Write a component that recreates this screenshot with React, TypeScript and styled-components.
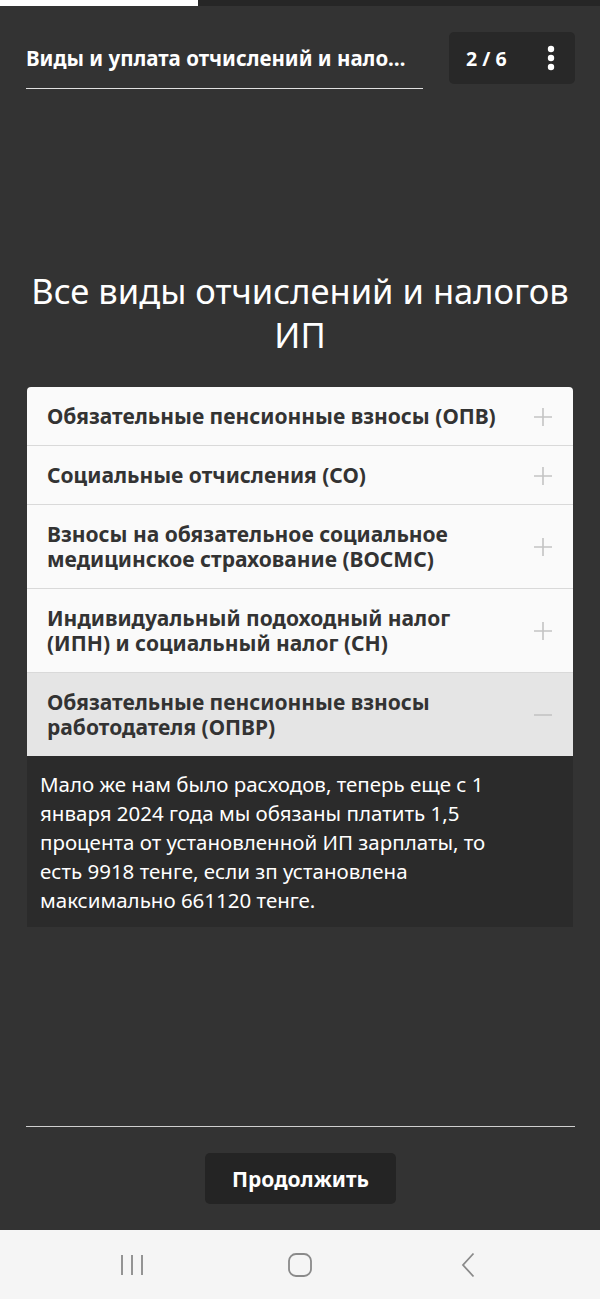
import React from "react";
import styled, { createGlobalStyle } from "styled-components";

const GlobalStyle = createGlobalStyle`
  * { box-sizing: border-box; }
  html, body { margin: 0; padding: 0; background: #333333; }
  body { font-family: "Noto Sans", "Open Sans", sans-serif; }
`;

const Screen = styled.div`
  height: 1230px;
  display: flex;
  flex-direction: column;
  background: #333333;
  color: #ffffff;
`;

const Progress = styled.div`
  height: 6px;
  background: #262626;
  flex-shrink: 0;
`;

const ProgressFill = styled.div`
  height: 100%;
  background: #ffffff;
`;

const Header = styled.div`
  display: flex;
  justify-content: space-between;
  align-items: flex-start;
  padding: 26px 25px 0 26px;
`;

const TitleBlock = styled.div`
  width: 397px;
  margin-top: 13px;
  padding-bottom: 17px;
  border-bottom: 1px solid #e0e0e0;
`;

const Title = styled.div`
  font-size: 20.5px;
  font-weight: 700;
  line-height: 26px;
  white-space: nowrap;
`;

const Counter = styled.div`
  width: 126px;
  height: 52px;
  background: #282828;
  border-radius: 5px;
  display: flex;
  align-items: center;
  justify-content: space-between;
  padding: 0 20px 0 17px;
  font-size: 19.5px;
  font-weight: 700;
`;

const Main = styled.div`
  flex: 1;
  padding: 180px 27px 0;
`;

const Heading = styled.h1`
  margin: 0 0 30px;
  font-size: 34.5px;
  font-weight: 400;
  line-height: 44px;
  text-align: center;
`;

const Accordion = styled.div`
  border-radius: 4px 4px 0 0;
  overflow: hidden;
`;

const Item = styled.div<{ $open?: boolean }>`
  display: flex;
  align-items: center;
  gap: 14px;
  padding: 17px 10px 16px 20px;
  background: ${(p) => (p.$open ? "#e5e5e5" : "#fafafa")};
  border-bottom: ${(p) => (p.$open ? "none" : "1px solid #d9d9d9")};
  color: #333333;
`;

const ItemTitle = styled.div`
  flex: 1;
  font-size: 21px;
  font-weight: 700;
  line-height: 25px;
`;

const IconBox = styled.div`
  width: 40px;
  display: flex;
  justify-content: center;
  color: #c4c4c4;
`;

const Panel = styled.div`
  background: #2b2b2b;
  padding: 14px 60px 12px 13px;
  font-size: 20.5px;
  line-height: 29px;
`;

const Footer = styled.div`
  margin: 0 25px 0 26px;
  border-top: 1px solid #cfcfcf;
  padding: 26px 0;
  display: flex;
  justify-content: center;
`;

const Button = styled.button`
  width: 191px;
  height: 51px;
  border: none;
  border-radius: 5px;
  background: #242424;
  color: #ffffff;
  font-family: inherit;
  font-size: 21px;
  font-weight: 700;
`;

const NavBar = styled.div`
  height: 69px;
  background: #f5f5f5;
  display: flex;
  align-items: center;
  justify-content: center;
  color: #8a8a8a;
`;

const NavSlot = styled.div`
  width: 168px;
  display: flex;
  justify-content: center;
`;

const Plus = () => (
  <svg width="20" height="20" viewBox="0 0 20 20">
    <path d="M10 1v18M1 10h18" stroke="currentColor" strokeWidth="1.6" />
  </svg>
);

const Minus = () => (
  <svg width="20" height="20" viewBox="0 0 20 20">
    <path d="M1 10h18" stroke="currentColor" strokeWidth="1.6" />
  </svg>
);

const Kebab = () => (
  <svg width="8" height="26" viewBox="0 0 8 26">
    <circle cx="4" cy="4" r="3.2" fill="#fff" />
    <circle cx="4" cy="13" r="3.2" fill="#fff" />
    <circle cx="4" cy="22" r="3.2" fill="#fff" />
  </svg>
);

const items = [
  "Обязательные пенсионные взносы (ОПВ)",
  "Социальные отчисления (СО)",
  "Взносы на обязательное социальное медицинское страхование (ВОСМС)",
  "Индивидуальный подоходный налог (ИПН) и социальный налог (СН)",
  "Обязательные пенсионные взносы работодателя (ОПВР)",
];

export default function App() {
  const step = 2;
  const total = 6;
  const openIndex = 4;

  return (
    <>
      <GlobalStyle />
      <Screen>
        <Progress>
          <ProgressFill style={{ width: `${(step / total) * 100 - 0.3}%` }} />
        </Progress>
        <Header>
          <TitleBlock>
            <Title>Виды и уплата отчислений и нало…</Title>
          </TitleBlock>
          <Counter>
            <span>
              {step} / {total}
            </span>
            <Kebab />
          </Counter>
        </Header>
        <Main>
          <Heading>Все виды отчислений и налогов ИП</Heading>
          <Accordion>
            {items.map((t, i) => (
              <Item key={t} $open={i === openIndex}>
                <ItemTitle>{t}</ItemTitle>
                <IconBox>{i === openIndex ? <Minus /> : <Plus />}</IconBox>
              </Item>
            ))}
          </Accordion>
          <Panel>
            Мало же нам было расходов, теперь еще с 1 января 2024 года мы обязаны платить 1,5
            процента от установленной ИП зарплаты, то есть 9918 тенге, если зп установлена
            максимально 661120 тенге.
          </Panel>
        </Main>
        <Footer>
          <Button>Продолжить</Button>
        </Footer>
      </Screen>
      <NavBar>
        <NavSlot>
          <svg width="24" height="22" viewBox="0 0 24 22">
            <path d="M2 1v20M12 1v20M22 1v20" stroke="currentColor" strokeWidth="1.8" />
          </svg>
        </NavSlot>
        <NavSlot>
          <svg width="24" height="24" viewBox="0 0 24 24">
            <rect x="1" y="1" width="22" height="22" rx="7" fill="none" stroke="currentColor" strokeWidth="1.8" />
          </svg>
        </NavSlot>
        <NavSlot>
          <svg width="14" height="26" viewBox="0 0 14 26">
            <path d="M12.5 1.5L2 13l10.5 11.5" fill="none" stroke="currentColor" strokeWidth="1.8" />
          </svg>
        </NavSlot>
      </NavBar>
    </>
  );
}
